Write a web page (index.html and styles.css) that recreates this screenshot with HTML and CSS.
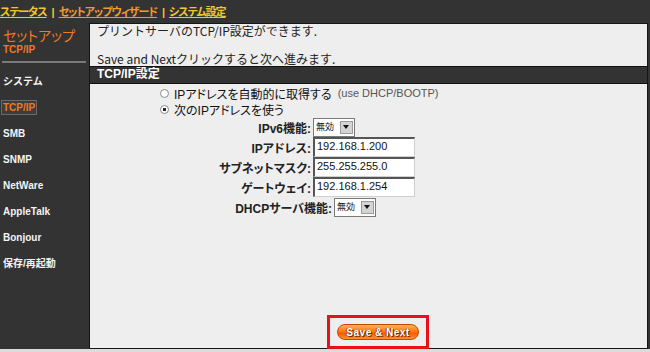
FILE: index.html
```html
<!DOCTYPE html>
<html lang="ja">
<head>
  <meta charset="UTF-8">
  <title>セットアップ - TCP/IP</title>
  <link rel="stylesheet" href="styles.css">
</head>
<body>
  <div class="page">
    <nav class="topnav">
      <a href="#" class="nav-link">ステータス</a>
      <span class="sep">|</span>
      <a href="#" class="nav-link current">セットアップウィザード</a>
      <span class="sep">|</span>
      <a href="#" class="nav-link">システム設定</a>
    </nav>

    <aside class="sidebar">
      <div class="side-title">セットアップ</div>
      <div class="side-sub">TCP/IP</div>
      <div class="side-rule"></div>
      <ul class="menu">
        <li>システム</li>
        <li class="active"><span>TCP/IP</span></li>
        <li>SMB</li>
        <li>SNMP</li>
        <li>NetWare</li>
        <li>AppleTalk</li>
        <li>Bonjour</li>
        <li>保存/再起動</li>
      </ul>
    </aside>

    <main class="panel">
      <div class="intro">
        プリントサーバのTCP/IP設定ができます.<br>
        <br>
        Save and Nextクリックすると次へ進みます.
      </div>
      <div class="bar">TCP/IP設定</div>

      <div class="radios">
        <label class="radio-row"><span class="radio"></span>IPアドレスを自動的に取得する <span class="hint">(use DHCP/BOOTP)</span></label>
        <label class="radio-row"><span class="radio checked"></span>次のIPアドレスを使う</label>
      </div>

      <div class="fields">
        <div class="label">IPv6機能:</div>
        <div class="ctrl"><span class="sel"><span class="sel-val">無効</span><span class="sel-btn"></span></span></div>
        <div class="label">IPアドレス:</div>
        <div class="ctrl"><span class="textbox">192.168.1.200</span></div>
        <div class="label">サブネットマスク:</div>
        <div class="ctrl"><span class="textbox">255.255.255.0</span></div>
        <div class="label">ゲートウェイ:</div>
        <div class="ctrl"><span class="textbox">192.168.1.254</span></div>
      </div>
      <div class="fields dhcp">
        <div class="label">DHCPサーバ機能:</div>
        <div class="ctrl"><span class="sel"><span class="sel-val">無効</span><span class="sel-btn"></span></span></div>
      </div>

      <div class="actions">
        <span class="btn-frame"><button type="button" class="btn-save">Save &amp; Next</button></span>
      </div>
    </main>
  </div>
</body>
</html>
```

FILE: styles.css
```css
/* Reset some defaults */
body, ul, li, button { margin: 0; padding: 0; box-sizing: border-box; }

body {
  background: #dcdcdc;
  font-family: "Liberation Sans", "Noto Sans CJK JP", sans-serif;
  font-size: 12px;
  color: #1a1a1a;
}

.page {
  display: grid;
  grid-template-columns: 89px 559px;
  grid-template-rows: 23px 326px;
  width: 650px;
  background: #333333;
}

/* top navigation */
.topnav {
  grid-column: 1 / 3;
  display: flex;
  align-items: center;
  gap: 5px;
  font-weight: bold;
  font-size: 11px;
  line-height: 22px;
  letter-spacing: -1px;
  color: #f2c631;
  font-feature-settings: "palt";
}

.nav-link {
  color: #f2c631;
  text-decoration: underline;
}

.nav-link.current {
  color: #f09a2c;
}

.sep {
  color: #f2c631;
}

/* left menu */
.sidebar {
  padding-top: 5px;
  color: #ffffff;
}

.side-title {
  padding-left: 3px;
  font-size: 14px;
  line-height: 16px;
  color: #f07a1e;
  font-feature-settings: "palt";
}

.side-sub {
  padding-left: 3px;
  font-size: 10px;
  font-weight: bold;
  line-height: 12px;
  color: #f07a1e;
}

.side-rule {
  margin: 5px 3px 0 2px;
  height: 2px;
  background: #7a7a7a;
}

.menu {
  list-style: none;
  margin-top: 6px;
}

.menu li {
  padding-left: 3px;
  height: 26px;
  line-height: 26px;
  font-size: 10px;
  font-weight: bold;
  color: #f4f4f4;
}

.menu li.active span {
  margin-left: -2px;
  padding: 1px 1px;
  border: 1px solid #6a6a6a;
  background: #3d3d3d;
  color: #f07a1e;
}

/* main panel */
.panel {
  display: flex;
  flex-direction: column;
  background: #eeeeee;
  border: 1px solid #161616;
}

.intro {
  padding-left: 7px;
  line-height: 14px;
  font-family: "Noto Sans CJK JP", "Liberation Sans", sans-serif;
  color: #222222;
}

.bar {
  height: 16px;
  padding-left: 7px;
  background: #333333;
  border-top: 1px solid #111111;
  border-bottom: 1px solid #111111;
  color: #ffffff;
  font-weight: bold;
  line-height: 14px;
}

.radios {
  padding: 1px 0 0 70px;
}

.radio-row {
  display: flex;
  align-items: center;
  height: 16px;
  color: #111111;
  font-feature-settings: "palt";
}

.radio {
  width: 7px;
  height: 7px;
  margin-right: 5px;
  border: 1px solid #8a8a8a;
  border-radius: 50%;
  background: #ffffff;
}

.radio.checked {
  background: radial-gradient(circle, #222 0 1.6px, #fff 2px);
}

.hint {
  margin-left: 6px;
  color: #555555;
  font-size: 11px;
}

.fields {
  display: grid;
  grid-template-columns: 221px auto;
  grid-auto-rows: 20px;
  column-gap: 2px;
  align-items: center;
}

.fields.dhcp {
  grid-template-columns: 242px auto;
}

.label {
  text-align: right;
  font-weight: bold;
  color: #222222;
  font-feature-settings: "palt";
}

.ctrl {
  display: flex;
  align-items: center;
}

.textbox {
  width: 97px;
  height: 17px;
  padding-left: 2px;
  background: #ffffff;
  border-top: 2px solid #555555;
  border-left: 2px solid #555555;
  border-right: 1px solid #cfcfcf;
  border-bottom: 1px solid #cfcfcf;
  font-size: 11px;
  line-height: 14px;
  color: #111111;
}

.sel {
  display: flex;
  align-items: center;
  width: 38px;
  height: 15px;
  padding: 1px;
  background: #ffffff;
  border: 1px solid #7a7a7a;
}

.sel-val {
  flex: 1;
  font-size: 9px;
  line-height: 11px;
  padding-left: 1px;
  color: #111111;
}

.sel-btn {
  position: relative;
  width: 11px;
  height: 11px;
  background: #d4d4d4;
  border: 1px solid #9a9a9a;
}

.sel-btn::after {
  content: "";
  position: absolute;
  left: 2px;
  top: 3px;
  border-left: 3px solid transparent;
  border-right: 3px solid transparent;
  border-top: 4px solid #111111;
}

.actions {
  margin-top: auto;
  margin-bottom: -1px;
  display: flex;
  justify-content: center;
  padding-left: 19px;
}

.btn-frame {
  display: flex;
  align-items: center;
  justify-content: center;
  width: 96px;
  height: 28px;
  border: 3px solid #e8101a;
}

.btn-save {
  width: 82px;
  height: 16px;
  border: 1px solid #c24a00;
  border-radius: 8px;
  background: linear-gradient(#ffb060, #ff7a10 45%, #ff5a00 60%, #ff9030);
  color: #ffffff;
  font-family: "Liberation Sans", sans-serif;
  font-size: 10px;
  font-weight: bold;
  letter-spacing: 0.5px;
  text-shadow: 1px 1px 0 #6a3000, -1px 0 0 #7a3a00;
  cursor: pointer;
}
```
